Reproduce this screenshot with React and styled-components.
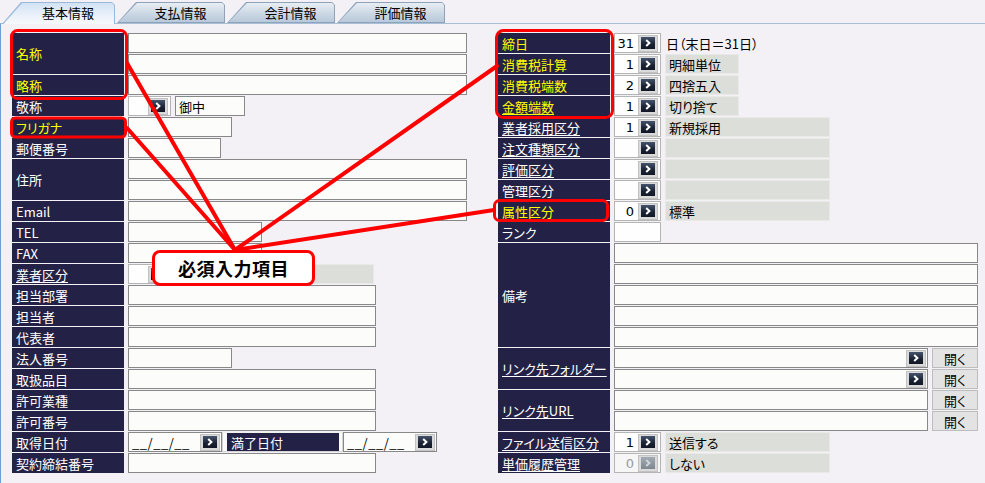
import React from "react";
import styled, { createGlobalStyle } from "styled-components";

const NAVY = "#232246";
const RED = "#ff0000";

const GlobalStyle = createGlobalStyle`
  html, body { margin: 0; padding: 0; background: #f3f1f5; }
  body {
    font-family: "Noto Sans CJK JP", "Liberation Sans", sans-serif;
    font-size: 13px;
    color: #000;
  }
  * { box-sizing: border-box; }
`;

const Screen = styled.div`
  position: relative;
  width: 985px;
  height: 483px;
  overflow: hidden;
  background: #f3f1f5;
  font-feature-settings: "palt";
`;

const TabBar = styled.div`
  position: relative;
  z-index: 1;
  display: flex;
  align-items: flex-start;
  gap: 2px;
  height: 23px;
  padding: 2px 0 0 2px;
`;

const Tab = styled.div`
  position: relative;
  flex: none;
  width: ${(p) => (p.$active ? 113 : 108)}px;
  height: ${(p) => (p.$active ? 22 : 21)}px;
  padding: 1px 0 0 19px;
  display: flex;
  align-items: ${(p) => (p.$active ? "flex-start" : "center")};
  justify-content: center;
  line-height: 20px;
  font-size: 13px;

  &::before,
  &::after {
    content: "";
    position: absolute;
  }
  &::before {
    inset: 0;
    background: ${(p) => (p.$active ? "#9ab8d8" : "#8ea2ba")};
    clip-path: polygon(0 100%, 19px 0, calc(100% - 3px) 0, 100% 3px, 100% 100%);
  }
  &::after {
    top: 1px;
    left: 1.5px;
    right: 1px;
    bottom: ${(p) => (p.$active ? 0 : 1)}px;
    background: ${(p) =>
      p.$active
        ? "linear-gradient(#d2e2f4, #eef4fb 70%, #f6f8fb)"
        : "linear-gradient(#e8eef4, #c9d6e3 60%, #b9c9da)"};
    clip-path: polygon(0 100%, 18.5px 0, calc(100% - 2px) 0, 100% 2px, 100% 100%);
  }
  span {
    position: relative;
    z-index: 1;
  }
`;

const Panel = styled.div`
  display: flex;
  gap: 32px;
  height: 460px;
  padding: 9px 0 0 11px;
  border-left: 1px solid #6e9fd0;
  border-top: 1px solid #a9bfd6;
`;

const Column = styled.div`
  display: flex;
  flex-direction: column;
  gap: 1px;
  width: ${(p) => p.$w}px;
  flex: none;
`;

const Group = styled.div`
  display: flex;
  gap: 4px;
`;

const Label = styled.div`
  flex: none;
  width: 112px;
  height: ${(p) => (p.$rows || 1) * 21 - 1}px;
  padding-left: 4px;
  display: flex;
  align-items: center;
  background: ${NAVY};
  color: ${(p) => (p.$required ? "#ffff00" : "#ffffff")};
  white-space: nowrap;
  font-size: 13px;
  line-height: 1;

  span {
    text-decoration: ${(p) => (p.$link ? "underline" : "none")};
    text-underline-offset: 2px;
  }
`;

const Stack = styled.div`
  display: flex;
  flex-direction: column;
  gap: 1px;
`;

const Line = styled.div`
  display: flex;
  gap: ${(p) => (p.$gap === undefined ? 4 : p.$gap)}px;
  height: 20px;
`;

const TextBox = styled.div`
  flex: none;
  width: ${(p) => p.$w}px;
  height: 20px;
  padding: 0 1px 0 3px;
  display: flex;
  align-items: center;
  justify-content: ${(p) => (p.$end ? "space-between" : "flex-start")};
  background: #fcfdfb;
  border: 1px solid #888888;
  white-space: nowrap;
`;

const CodeBox = styled.div`
  flex: none;
  width: ${(p) => p.$w || 47}px;
  height: 20px;
  padding-right: 2px;
  display: flex;
  align-items: center;
  justify-content: flex-end;
  gap: 4px;
  background: ${(p) => (p.$disabled ? "#f6f6f6" : "#fdfefd")};
  border: 1px solid #b4b4b4;
  color: ${(p) => (p.$disabled ? "#9a9a9a" : "#000")};
  font-family: "DejaVu Sans", "Noto Sans CJK JP", sans-serif;
  font-size: 13px;
`;

const PickFrame = styled.span`
  flex: none;
  width: 20px;
  height: 17px;
  display: flex;
  align-items: center;
  justify-content: center;
  background: #dadada;
  border: 1px solid #c2c2c2;
`;

const Knob = styled.span`
  width: 14px;
  height: 12px;
  display: flex;
  align-items: center;
  justify-content: center;
  background: ${(p) =>
    p.$disabled
      ? "linear-gradient(#a2aab3, #7e8791)"
      : "linear-gradient(#44536c, #1a2233 60%, #121826)"};
`;

const NameBox = styled.div`
  flex: none;
  width: ${(p) => p.$w}px;
  height: 20px;
  padding-left: 3px;
  display: flex;
  align-items: center;
  background: #dcdeda;
  border: 1px solid #e9eae8;
  white-space: nowrap;
`;

const Plain = styled.div`
  display: flex;
  align-items: center;
  padding-left: 1px;
  white-space: nowrap;
`;

const OpenButton = styled.div`
  flex: none;
  width: 46px;
  height: 20px;
  display: flex;
  align-items: center;
  justify-content: center;
  background: #e3e3e3;
  border: 1px solid #bdbdbd;
`;

const DateText = styled.span`
  letter-spacing: 0.5px;
`;

const SubLabelFrame = styled.div`
  flex: none;
  width: 121px;
  height: 20px;
  padding: 0 3px 0 4px;
  background: #fafafa;
  border: 1px solid #d4d4d4;
  border-top-color: #f0f0f0;
`;

const SubLabel = styled.div`
  height: 100%;
  padding-left: 4px;
  display: flex;
  align-items: center;
  background: ${NAVY};
  color: #fff;
`;

const Overlay = styled.svg`
  position: absolute;
  left: 0;
  top: 0;
  z-index: 5;
  pointer-events: none;
`;

const Callout = styled.div`
  position: absolute;
  left: 152px;
  top: 250px;
  z-index: 6;
  width: 163px;
  height: 36px;
  display: flex;
  align-items: center;
  justify-content: center;
  background: #fff;
  border: 3px solid ${RED};
  border-radius: 8px;
  font-weight: 700;
  font-size: 18px;
  letter-spacing: 0.5px;
`;

const Pick = ({ disabled }) => (
  <PickFrame>
    <Knob $disabled={disabled}>
      <svg width="6" height="8" viewBox="0 0 6 8">
        <path
          d="M1.2 1 L4.4 4 L1.2 7"
          fill="none"
          stroke={disabled ? "#d0d4d8" : "#ffffff"}
          strokeWidth="2"
        />
      </svg>
    </Knob>
  </PickFrame>
);

const Code = ({ value, w, disabled, noButton }) => (
  <CodeBox $w={w} $disabled={disabled}>
    {value && <span>{value}</span>}
    {!noButton && <Pick disabled={disabled} />}
  </CodeBox>
);

const Field = ({ label, rows = 1, required, link, children }) => (
  <Group>
    <Label $rows={rows} $required={required} $link={link}>
      <span>{label}</span>
    </Label>
    <Stack>{children}</Stack>
  </Group>
);

const Input = ({ w }) => (
  <Line>
    <TextBox $w={w} />
  </Line>
);

const DateBox = () => (
  <TextBox $w={94} $end>
    <DateText>__/__/__</DateText>
    <Pick />
  </TextBox>
);

const Select = ({ value, name, w = 165, disabled }) => (
  <Line>
    <Code value={value} disabled={disabled} />
    <NameBox $w={w}>{name}</NameBox>
  </Line>
);

const LinkLine = ({ withPick }) => (
  <Line>
    <TextBox $w={314} $end={withPick}>
      {withPick && <span />}
      {withPick && <Pick />}
    </TextBox>
    <OpenButton>開く</OpenButton>
  </Line>
);

const LeftForm = () => (
  <Column $w={454}>
    <Field label="名称" rows={2} required>
      <Input w={339} />
      <Input w={339} />
    </Field>
    <Field label="略称" required>
      <Input w={339} />
    </Field>
    <Field label="敬称">
      <Line>
        <Code w={43} />
        <TextBox $w={70}>御中</TextBox>
      </Line>
    </Field>
    <Field label="フリガナ" required>
      <Input w={104} />
    </Field>
    <Field label="郵便番号">
      <Input w={93} />
    </Field>
    <Field label="住所" rows={2}>
      <Input w={339} />
      <Input w={339} />
    </Field>
    <Field label="Email">
      <Input w={339} />
    </Field>
    <Field label="TEL">
      <Input w={134} />
    </Field>
    <Field label="FAX">
      <Input w={134} />
    </Field>
    <Field label="業者区分" link>
      <Line>
        <Code w={43} />
        <NameBox $w={199} />
      </Line>
    </Field>
    <Field label="担当部署">
      <Input w={248} />
    </Field>
    <Field label="担当者">
      <Input w={248} />
    </Field>
    <Field label="代表者">
      <Input w={248} />
    </Field>
    <Field label="法人番号">
      <Input w={104} />
    </Field>
    <Field label="取扱品目">
      <Input w={248} />
    </Field>
    <Field label="許可業種">
      <Input w={248} />
    </Field>
    <Field label="許可番号">
      <Input w={248} />
    </Field>
    <Field label="取得日付">
      <Line $gap={0}>
        <DateBox />
        <SubLabelFrame>
          <SubLabel>満了日付</SubLabel>
        </SubLabelFrame>
        <DateBox />
      </Line>
    </Field>
    <Field label="契約締結番号">
      <Input w={248} />
    </Field>
  </Column>
);

const RightForm = () => (
  <Column $w={480}>
    <Field label="締日" required>
      <Line>
        <Code value="31" />
        <Plain>日（末日＝31日）</Plain>
      </Line>
    </Field>
    <Field label="消費税計算" required>
      <Select value="1" name="明細単位" w={74} />
    </Field>
    <Field label="消費税端数" required>
      <Select value="2" name="四捨五入" w={74} />
    </Field>
    <Field label="金額端数" required link>
      <Select value="1" name="切り捨て" w={74} />
    </Field>
    <Field label="業者採用区分" link>
      <Select value="1" name="新規採用" />
    </Field>
    <Field label="注文種類区分" link>
      <Select />
    </Field>
    <Field label="評価区分" link>
      <Select />
    </Field>
    <Field label="管理区分">
      <Select />
    </Field>
    <Field label="属性区分" required link>
      <Select value="0" name="標準" />
    </Field>
    <Field label="ランク">
      <Line>
        <Code noButton />
      </Line>
    </Field>
    <Field label="備考" rows={5}>
      {[0, 1, 2, 3, 4].map((i) => (
        <Input key={i} w={364} />
      ))}
    </Field>
    <Field label="リンク先フォルダー" rows={2} link>
      <LinkLine withPick />
      <LinkLine withPick />
    </Field>
    <Field label="リンク先URL" rows={2} link>
      <LinkLine />
      <LinkLine />
    </Field>
    <Field label="ファイル送信区分" link>
      <Select value="1" name="送信する" />
    </Field>
    <Field label="単価履歴管理" link>
      <Select value="0" name="しない" disabled />
    </Field>
  </Column>
);

const Annotations = () => (
  <Overlay width="985" height="483" viewBox="0 0 985 483">
    <g fill="none" stroke={RED} strokeWidth="3">
      <rect x="11.5" y="30.5" width="115" height="68" rx="6" />
      <rect x="11.5" y="118" width="114" height="19" rx="4" />
      <rect x="496.5" y="30.5" width="116" height="87" rx="7" />
      <rect x="494.5" y="200.5" width="113" height="20" rx="5" />
    </g>
    <g stroke={RED} strokeWidth="4" strokeLinecap="round">
      <line x1="127" y1="63" x2="235" y2="250" />
      <line x1="127" y1="128" x2="235" y2="250" />
      <line x1="497" y1="66" x2="235" y2="250" />
      <line x1="494" y1="210" x2="235" y2="250" />
    </g>
  </Overlay>
);

const App = () => (
  <Screen>
    <GlobalStyle />
    <TabBar>
      <Tab $active>
        <span>基本情報</span>
      </Tab>
      <Tab>
        <span>支払情報</span>
      </Tab>
      <Tab>
        <span>会計情報</span>
      </Tab>
      <Tab>
        <span>評価情報</span>
      </Tab>
    </TabBar>
    <Panel>
      <LeftForm />
      <RightForm />
    </Panel>
    <Annotations />
    <Callout>必須入力項目</Callout>
  </Screen>
);

export default App;
